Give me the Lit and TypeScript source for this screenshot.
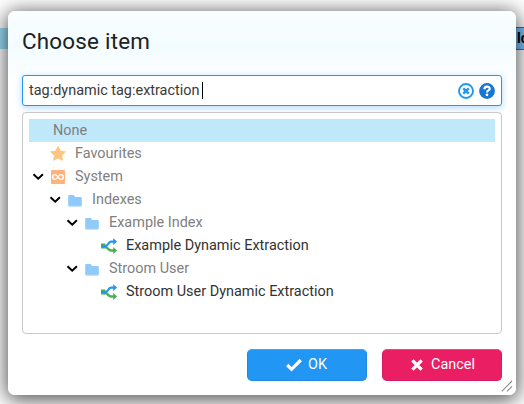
import { LitElement, html, css, svg } from "lit";
import { customElement } from "lit/decorators.js";
import { classMap } from "lit/directives/class-map.js";

interface TreeItem {
  label: string;
  depth: number;
  icon?: "star" | "system" | "folder" | "extraction";
  open?: boolean;
  selected?: boolean;
  match?: boolean;
}

const ITEMS: TreeItem[] = [
  { label: "None", depth: 0, selected: true },
  { label: "Favourites", depth: 0, icon: "star" },
  { label: "System", depth: 0, icon: "system", open: true },
  { label: "Indexes", depth: 1, icon: "folder", open: true },
  { label: "Example Index", depth: 2, icon: "folder", open: true },
  { label: "Example Dynamic Extraction", depth: 3, icon: "extraction", match: true },
  { label: "Stroom User", depth: 2, icon: "folder", open: true },
  { label: "Stroom User Dynamic Extraction", depth: 3, icon: "extraction", match: true },
];

const GLYPHS = {
  star: svg`<path d="M9 1.5l2.200 4.600 5 .7-3.700 3.500 1 5L9 12.900l-4.500 2.400 1-5L1.800 6.800l5-.7z" fill="#ffc680" stroke="#ffc680" stroke-width="1" stroke-linejoin="round"/>`,
  system: svg`<rect x="2" y="2" width="14" height="14" rx="1" fill="#ffb27c"/>
    <path d="M9 9C7.900 7.200 7.200 6.600 6.100 6.600a2.400 2.400 0 0 0 0 4.800C7.200 11.400 7.900 10.800 9 9S10.800 6.600 11.900 6.600a2.400 2.400 0 0 1 0 4.800C10.800 11.400 10.100 10.800 9 9z" fill="none" stroke="#fff" stroke-width="1.400"/>`,
  folder: svg`<path d="M2.200 12.500h13.600v2.200a1.200 1.200 0 0 1-1.200 1.200H3.400a1.200 1.200 0 0 1-1.200-1.200z" fill="#c3e1fb"/>
    <path d="M3.400 4h4.200L9.200 5.900h5.400a1.200 1.200 0 0 1 1.200 1.200v6.500a1.200 1.200 0 0 1-1.200 1.200H3.400a1.200 1.200 0 0 1-1.200-1.200V5.200A1.200 1.200 0 0 1 3.400 4z" fill="#90caf9"/>`,
  extraction: svg`<path d="M1 7.800h4.500M1 10.400h4.600c2.600 0 2.600 3.100 5.500 3.100h3" fill="none" stroke="#4caf50" stroke-width="2.400"/>
    <path d="M13.200 10.100l3.900 3.400-3.900 3.400z" fill="#4caf50"/>
    <path d="M1 9.200h4.500C8.200 9.200 8 4.600 11 4.600h3" fill="none" stroke="#2196f3" stroke-width="2.200"/>
    <path d="M13.200 1.200l3.900 3.400L13.200 8z" fill="#2196f3"/>`,
};

@customElement("app-root")
export class AppRoot extends LitElement {
  static styles = css`
    :host {
      display: block;
      position: relative;
      box-sizing: border-box;
      width: 524px;
      height: 404px;
      padding: 11px 8px 9px;
      overflow: hidden;
      background: #fff;
      font-family: Roboto, sans-serif;
      font-size: 14.450px;
      color: #3a3a3a;
    }
    * { box-sizing: border-box; }
    svg { display: block; flex: none; }
    .behind { position: absolute; overflow: hidden; }
    .tab { left: 0; top: 28px; width: 10px; height: 21px; background: #9de1fb; }
    .selected-tab {
      right: 0; top: 27px; width: 8px; height: 23px; padding-left: 1px;
      border: solid #1976d2; border-width: 1px 0;
      background: #7cc4ff; color: #000; font-weight: 700; font-size: 14px; line-height: 21px;
    }
    .dialog {
      position: relative;
      display: flex;
      flex-direction: column;
      height: 384px;
      padding: 0 14px;
      border-radius: 7px;
      background: linear-gradient(#fafeff 0, #f2fcff 35px, #fff 72px);
      box-shadow: 0 3px 20px 2px rgba(0, 0, 0, .68);
    }
    h1 {
      margin: 0;
      height: 64px;
      line-height: 61px;
      font-size: 22.400px;
      font-weight: 400;
      letter-spacing: .22px;
      color: #212121;
    }
    .search {
      display: flex;
      align-items: center;
      height: 31px;
      flex: none;
      padding: 0 6px;
      border: 1px solid #2196f3;
      border-radius: 3px;
      background: #fff;
      box-shadow: 0 2px 7px rgba(33, 150, 243, .35);
    }
    .caret { width: 1px; height: 17px; margin-left: 3px; background: #000; }
    .tools { display: flex; gap: 5px; margin-left: auto; }
    .tree {
      height: 222px;
      flex: none;
      margin-top: 6px;
      padding: 6px;
      border: 1px solid #c8c8c8;
      border-radius: 4px;
      background: #fff;
    }
    .row { display: flex; align-items: center; height: 23px; color: #808080; line-height: 23px; }
    .row.selected { background: #bfe8fb; }
    .row.match { color: #333; }
    .row.d1 { padding-left: 17px; }
    .row.d2 { padding-left: 34px; }
    .row.d3 { padding-left: 51px; }
    .toggle { width: 20px; }
    .icon { width: 26px; }
    .row.selected .icon { width: 4px; }
    .actions { display: flex; justify-content: flex-end; gap: 15px; margin-top: 15px; }
    button {
      display: flex;
      align-items: center;
      justify-content: center;
      width: 120px;
      height: 32px;
      padding: 0 2px 2px 0;
      border: 1px solid #1e88e5;
      border-top-color: #45a3f0;
      border-radius: 5px;
      background: #2196f3;
      color: #fff;
      font: 400 14.400px Roboto, sans-serif;
    }
    button svg { margin: 2px 5px 0 0; }
    .cancel { padding-right: 0; background: #e91e63; border-color: #d81b60; border-top-color: #ed4880; }
    .cancel svg { margin-right: 6px; }
    .grip { position: absolute; right: 3px; bottom: 3px; }
  `;

  private renderRow(item: TreeItem) {
    const classes = {
      row: true,
      selected: !!item.selected,
      match: !!item.match,
      ["d" + item.depth]: true,
    };
    return html`<div class=${classMap(classes)}>
      <span class="toggle">${item.open
        ? html`<svg width="18" height="18" viewBox="0 0 18 18"><path d="M4.500 6.200l4.700 4.500L13.900 6.200" fill="none" stroke="#000" stroke-width="2"/></svg>`
        : ""}</span>
      <span class="icon">${item.icon
        ? html`<svg width="18" height="18" viewBox="0 0 18 18">${GLYPHS[item.icon]}</svg>`
        : ""}</span>
      <span>${item.label}</span>
    </div>`;
  }

  render() {
    return html`
      <div class="behind tab"></div>
      <div class="behind selected-tab">lo</div>
      <div class="dialog">
        <h1>Choose item</h1>
        <div class="search">
          <span>tag:dynamic tag:extraction</span><span class="caret"></span>
          <span class="tools">
            <svg width="16" height="16" viewBox="0 0 16 16">
              <circle cx="8" cy="8" r="7" fill="none" stroke="#2196f3" stroke-width="1.900"/>
              <path d="M5.300 5.300l5.400 5.400M10.700 5.300l-5.400 5.400" stroke="#2196f3" stroke-width="2.500"/>
            </svg>
            <svg width="16" height="16" viewBox="0 0 16 16">
              <circle cx="8" cy="8" r="7.900" fill="#1976d2"/>
              <path d="M5.400 6.300C5.400 2.700 10.700 2.900 10.700 5.700 10.700 7.600 8 7.300 8 9.500" fill="none" stroke="#fff" stroke-width="2.200"/>
              <circle cx="8" cy="11.800" r="1.350" fill="#fff"/>
            </svg>
          </span>
        </div>
        <div class="tree">${ITEMS.map((item) => this.renderRow(item))}</div>
        <div class="actions">
          <button>
            <svg width="18" height="16" viewBox="0 0 18 16"><path d="M2.200 8l4.400 4.300 9.200-9.300" fill="none" stroke="#fff" stroke-width="3.200"/></svg>
            <span>OK</span>
          </button>
          <button class="cancel">
            <svg width="16" height="16" viewBox="0 0 16 16"><path d="M3.400 3.400l9.200 9.200M12.600 3.400l-9.200 9.200" stroke="#fff" stroke-width="3.400"/></svg>
            <span>Cancel</span>
          </button>
        </div>
        <svg class="grip" width="12" height="12" viewBox="0 0 12 12"><path d="M.8 11.300L11 1M6 11.300l5-5" stroke="#888" stroke-width="1.100"/></svg>
      </div>`;
  }
}
